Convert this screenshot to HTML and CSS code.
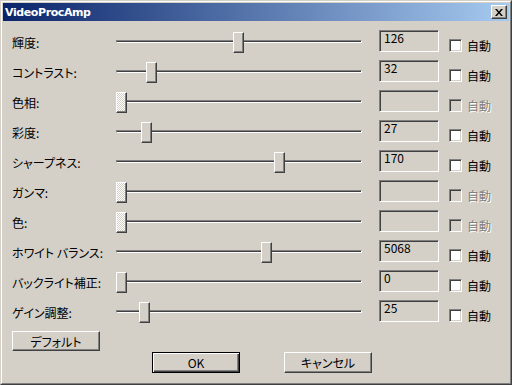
FILE: index.html
```html
<!DOCTYPE html>
<html lang="ja">
<head>
    <meta charset="UTF-8">
    <title>VideoProcAmp</title>
    <link rel="stylesheet" href="styles.css">
</head>
<body>
    <div class="window">
        <div class="frame">
            <div class="titlebar">
                <span class="title">VideoProcAmp</span>
                <span class="close-btn">
                    <svg width="8" height="7" viewBox="0 0 8 7">
                        <path d="M0 0h2l2 2.5 2-2.5h2l-3 3.5 3 3.5h-2l-2-2.5-2 2.5h-2l3-3.5z" fill="#000"/>
                    </svg>
                </span>
            </div>

            <div class="client">
                <div class="row">
                    <div class="row-label">輝度:</div>
                    <div class="slider"><div class="track"></div><div class="thumb" style="left: 117px"></div></div>
                    <div class="edit">126</div>
                    <label class="auto"><span class="check"></span>自動</label>
                </div>
                <div class="row">
                    <div class="row-label">コントラスト:</div>
                    <div class="slider"><div class="track"></div><div class="thumb" style="left: 30px"></div></div>
                    <div class="edit">32</div>
                    <label class="auto"><span class="check"></span>自動</label>
                </div>
                <div class="row">
                    <div class="row-label">色相:</div>
                    <div class="slider"><div class="track"></div><div class="thumb disabled" style="left: 0px"></div></div>
                    <div class="edit"></div>
                    <label class="auto disabled"><span class="check"></span>自動</label>
                </div>
                <div class="row">
                    <div class="row-label">彩度:</div>
                    <div class="slider"><div class="track"></div><div class="thumb" style="left: 25px"></div></div>
                    <div class="edit">27</div>
                    <label class="auto"><span class="check"></span>自動</label>
                </div>
                <div class="row">
                    <div class="row-label">シャープネス:</div>
                    <div class="slider"><div class="track"></div><div class="thumb" style="left: 158px"></div></div>
                    <div class="edit">170</div>
                    <label class="auto"><span class="check"></span>自動</label>
                </div>
                <div class="row">
                    <div class="row-label">ガンマ:</div>
                    <div class="slider"><div class="track"></div><div class="thumb disabled" style="left: 0px"></div></div>
                    <div class="edit"></div>
                    <label class="auto disabled"><span class="check"></span>自動</label>
                </div>
                <div class="row">
                    <div class="row-label">色:</div>
                    <div class="slider"><div class="track"></div><div class="thumb disabled" style="left: 0px"></div></div>
                    <div class="edit"></div>
                    <label class="auto disabled"><span class="check"></span>自動</label>
                </div>
                <div class="row">
                    <div class="row-label">ホワイト バランス:</div>
                    <div class="slider"><div class="track"></div><div class="thumb" style="left: 145px"></div></div>
                    <div class="edit">5068</div>
                    <label class="auto"><span class="check"></span>自動</label>
                </div>
                <div class="row">
                    <div class="row-label">バックライト補正:</div>
                    <div class="slider"><div class="track"></div><div class="thumb" style="left: 0px"></div></div>
                    <div class="edit">0</div>
                    <label class="auto"><span class="check"></span>自動</label>
                </div>
                <div class="row">
                    <div class="row-label">ゲイン調整:</div>
                    <div class="slider"><div class="track"></div><div class="thumb" style="left: 23px"></div></div>
                    <div class="edit">25</div>
                    <label class="auto"><span class="check"></span>自動</label>
                </div>

                <div class="button btn-default">デフォルト</div>
                <div class="actions">
                    <div class="button btn-ok">OK</div>
                    <div class="button btn-cancel">キャンセル</div>
                </div>
            </div>
        </div>
    </div>
</body>
</html>
```

FILE: styles.css
```css
:root{
    --face: #d4d0c8;
    --light: #ffffff;
    --shadow: #808080;
    --dark: #404040;
    --title-left: #0a246a;
    --title-right: #a6caf0;
}
html,body{
    margin: 0;
    padding: 0;
}
body{
    background-color: var(--face);
    font-family: "Noto Sans CJK JP", "DejaVu Sans", sans-serif;
    font-size: 12px;
    font-feature-settings: "palt";
    color: #000;
}

/* ============
    Window frame
    ============ */
.window{
    width: 512px;
    height: 385px;
    box-sizing: border-box;
    border: 1px solid;
    border-color: var(--face) var(--dark) var(--dark) var(--face);
}
.frame{
    height: 100%;
    box-sizing: border-box;
    border: 1px solid;
    border-color: var(--light) var(--shadow) var(--shadow) var(--light);
    padding: 1px;
}

/* ============
    Title bar
    ============ */
.titlebar{
    height: 18px;
    display: flex;
    align-items: center;
    justify-content: space-between;
    padding: 0 2px 0 2px;
    background: linear-gradient(to right, var(--title-left), var(--title-right));
}
.title{
    font-family: "DejaVu Sans", sans-serif;
    font-weight: bold;
    font-size: 11px;
    letter-spacing: -0.4px;
    color: #fff;
}
.close-btn{
    width: 16px;
    height: 14px;
    box-sizing: border-box;
    display: flex;
    align-items: center;
    justify-content: center;
    background-color: var(--face);
    border: 1px solid;
    border-color: var(--light) var(--dark) var(--dark) var(--light);
    box-shadow: inset -1px -1px var(--shadow);
}
.close-btn svg{
    display: block;
}

/* ============
    Rows
    ============ */
.client{
    padding: 5px 0 0 9px;
}
.row{
    height: 30px;
    display: flex;
    align-items: center;
}
.row-label{
    width: 104px;
    padding-top: 2px;
    white-space: nowrap;
}

/* slider: sunken track + raised thumb */
.slider{
    position: relative;
    width: 246px;
    height: 30px;
}
.track{
    margin-top: 14px;
    height: 3px;
    box-sizing: border-box;
    border: 1px solid;
    border-color: var(--shadow) var(--light) var(--light) var(--shadow);
    background-color: var(--dark);
}
.thumb{
    position: absolute;
    top: 6px;
    width: 11px;
    height: 21px;
    box-sizing: border-box;
    background-color: var(--face);
    border: 1px solid;
    border-color: var(--light) var(--dark) var(--dark) var(--light);
    box-shadow: inset -1px -1px var(--shadow);
}
.thumb.disabled{
    background: repeating-conic-gradient(var(--light) 0 25%, var(--face) 0 50%) 0 0 / 2px 2px;
}

/* sunken read-only edit box */
.edit{
    width: 60px;
    height: 22px;
    box-sizing: border-box;
    margin-left: 17px;
    padding: 0 0 0 4px;
    line-height: 14px;
    border: 1px solid;
    border-color: var(--shadow) var(--light) var(--light) var(--shadow);
    box-shadow: inset 1px 1px var(--dark), inset -1px -1px var(--face);
}

/* checkbox + caption */
.auto{
    display: flex;
    align-items: center;
    margin: 8px 0 0 10px;
    gap: 5px;
}
.check{
    width: 13px;
    height: 13px;
    box-sizing: border-box;
    background-color: #fff;
    border: 1px solid;
    border-color: var(--shadow) var(--light) var(--light) var(--shadow);
    box-shadow: inset 1px 1px var(--dark), inset -1px -1px var(--face);
}
.auto.disabled{
    color: var(--shadow);
    text-shadow: 1px 1px var(--light);
}
.auto.disabled .check{
    background-color: var(--face);
}

/* ============
    Buttons
    ============ */
.button{
    width: 88px;
    box-sizing: border-box;
    display: flex;
    align-items: center;
    justify-content: center;
    background-color: var(--face);
    border: 1px solid;
    border-color: var(--light) var(--dark) var(--dark) var(--light);
    box-shadow: inset -1px -1px var(--shadow);
}
.btn-default{
    height: 20px;
    margin: 5px 0 0 0;
}
.actions{
    display: flex;
    gap: 44px;
    margin: 1px 0 0 140px;
}
.btn-ok, .btn-cancel{
    height: 21px;
}
.btn-ok{
    border-color: #000;
    box-shadow: inset 1px 1px var(--light), inset -1px -1px var(--dark), inset -2px -2px var(--shadow);
}
```
